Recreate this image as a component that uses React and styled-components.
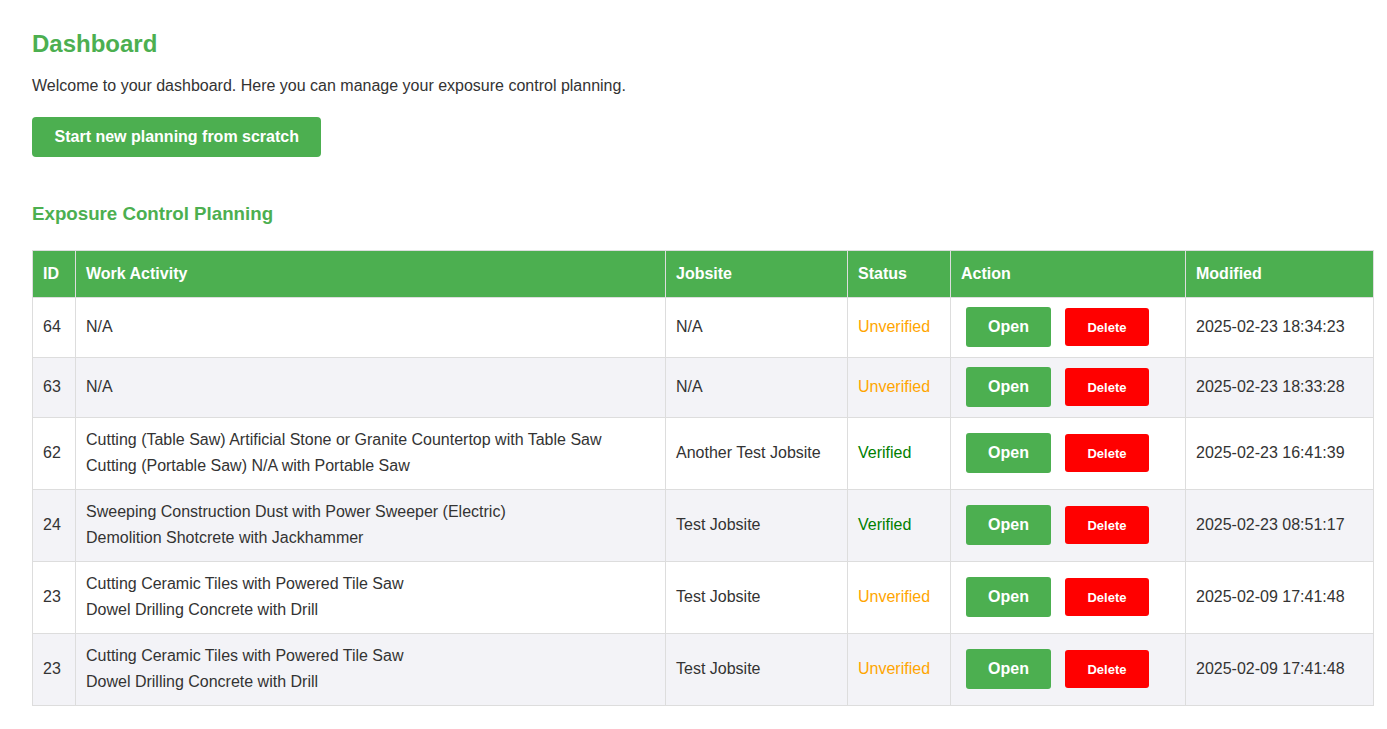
import styled, { createGlobalStyle } from 'styled-components';

const GlobalStyle = createGlobalStyle`
  body {
    margin: 0;
    font-family: 'Liberation Sans', Arial, sans-serif;
    color: #333;
    background: #fff;
  }
`;

const rows = [
  { id: 64, activities: ['N/A'], jobsite: 'N/A', verified: false, modified: '2025-02-23 18:34:23' },
  { id: 63, activities: ['N/A'], jobsite: 'N/A', verified: false, modified: '2025-02-23 18:33:28' },
  {
    id: 62,
    activities: [
      'Cutting (Table Saw) Artificial Stone or Granite Countertop with Table Saw',
      'Cutting (Portable Saw) N/A with Portable Saw',
    ],
    jobsite: 'Another Test Jobsite',
    verified: true,
    modified: '2025-02-23 16:41:39',
  },
  {
    id: 24,
    activities: ['Sweeping Construction Dust with Power Sweeper (Electric)', 'Demolition Shotcrete with Jackhammer'],
    jobsite: 'Test Jobsite',
    verified: true,
    modified: '2025-02-23 08:51:17',
  },
  {
    id: 23,
    activities: ['Cutting Ceramic Tiles with Powered Tile Saw', 'Dowel Drilling Concrete with Drill'],
    jobsite: 'Test Jobsite',
    verified: false,
    modified: '2025-02-09 17:41:48',
  },
  {
    id: 23,
    activities: ['Cutting Ceramic Tiles with Powered Tile Saw', 'Dowel Drilling Concrete with Drill'],
    jobsite: 'Test Jobsite',
    verified: false,
    modified: '2025-02-09 17:41:48',
  },
];

export default function App() {
  return (
    <Page>
      <GlobalStyle />
      <Title>Dashboard</Title>
      <Intro>Welcome to your dashboard. Here you can manage your exposure control planning.</Intro>
      <PrimaryButton>Start new planning from scratch</PrimaryButton>
      <SectionTitle>Exposure Control Planning</SectionTitle>
      <Table>
        <colgroup>
          <col style={{ width: 43 }} />
          <col style={{ width: 590 }} />
          <col style={{ width: 182 }} />
          <col style={{ width: 103 }} />
          <col style={{ width: 235 }} />
          <col style={{ width: 188 }} />
        </colgroup>
        <thead>
          <tr>
            <Th>ID</Th>
            <Th>Work Activity</Th>
            <Th>Jobsite</Th>
            <Th>Status</Th>
            <Th>Action</Th>
            <Th>Modified</Th>
          </tr>
        </thead>
        <tbody>
          {rows.map((row, i) => (
            <Row key={i}>
              <Td>{row.id}</Td>
              <Td>
                {row.activities.map((a, j) => (
                  <Activity key={j}>{a}</Activity>
                ))}
              </Td>
              <Td>{row.jobsite}</Td>
              <Td>
                <Status $verified={row.verified}>{row.verified ? 'Verified' : 'Unverified'}</Status>
              </Td>
              <Td>
                <Actions>
                  <OpenButton>Open</OpenButton>
                  <DeleteButton>Delete</DeleteButton>
                </Actions>
              </Td>
              <Td>{row.modified}</Td>
            </Row>
          ))}
        </tbody>
      </Table>
    </Page>
  );
}

const Page = styled.div`
  padding: 30px 15px 20px 32px;
`;

const Title = styled.h2`
  margin: 0;
  font-size: 24px;
  line-height: 28px;
  font-weight: bold;
  color: #4caf50;
`;

const Intro = styled.p`
  margin: 15px 0 18px;
  font-size: 16px;
  line-height: 26px;
`;

const PrimaryButton = styled.button`
  display: block;
  height: 40px;
  padding: 0 22.5px;
  border: none;
  border-radius: 4px;
  background: #4caf50;
  color: #fff;
  font-family: inherit;
  font-size: 16px;
  font-weight: bold;
  cursor: pointer;
`;

const SectionTitle = styled.h3`
  margin: 46px 0 25px;
  font-size: 18.72px;
  line-height: 22px;
  font-weight: bold;
  color: #4caf50;
`;

const Table = styled.table`
  width: 100%;
  table-layout: fixed;
  border-collapse: collapse;
  font-size: 16px;
  line-height: 26px;
`;

const Th = styled.th`
  padding: 10px;
  background: #4caf50;
  color: #fff;
  text-align: left;
  font-weight: bold;
  border: 1px solid #ddd;
`;

const Row = styled.tr`
  background: #fff;
  &:nth-child(even) {
    background: #f3f3f7;
  }
`;

const Td = styled.td`
  padding: 9px 10px 10px;
  border: 1px solid #ddd;
  vertical-align: middle;
  text-align: left;
`;

const Activity = styled.div`
  line-height: 26px;
`;

const Status = styled.span`
  color: ${(p) => (p.$verified ? '#008000' : '#ffa500')};
`;

const Actions = styled.div`
  display: flex;
  align-items: center;
  gap: 14px;
  padding-left: 5px;
`;

const OpenButton = styled.button`
  width: 85px;
  height: 40px;
  border: none;
  border-radius: 3px;
  background: #4caf50;
  color: #fff;
  font-family: inherit;
  font-size: 16px;
  font-weight: bold;
  cursor: pointer;
`;

const DeleteButton = styled.button`
  width: 84px;
  height: 38px;
  border: none;
  border-radius: 3px;
  background: #ff0000;
  color: #fff;
  font-family: inherit;
  font-size: 13px;
  font-weight: bold;
  cursor: pointer;
`;
